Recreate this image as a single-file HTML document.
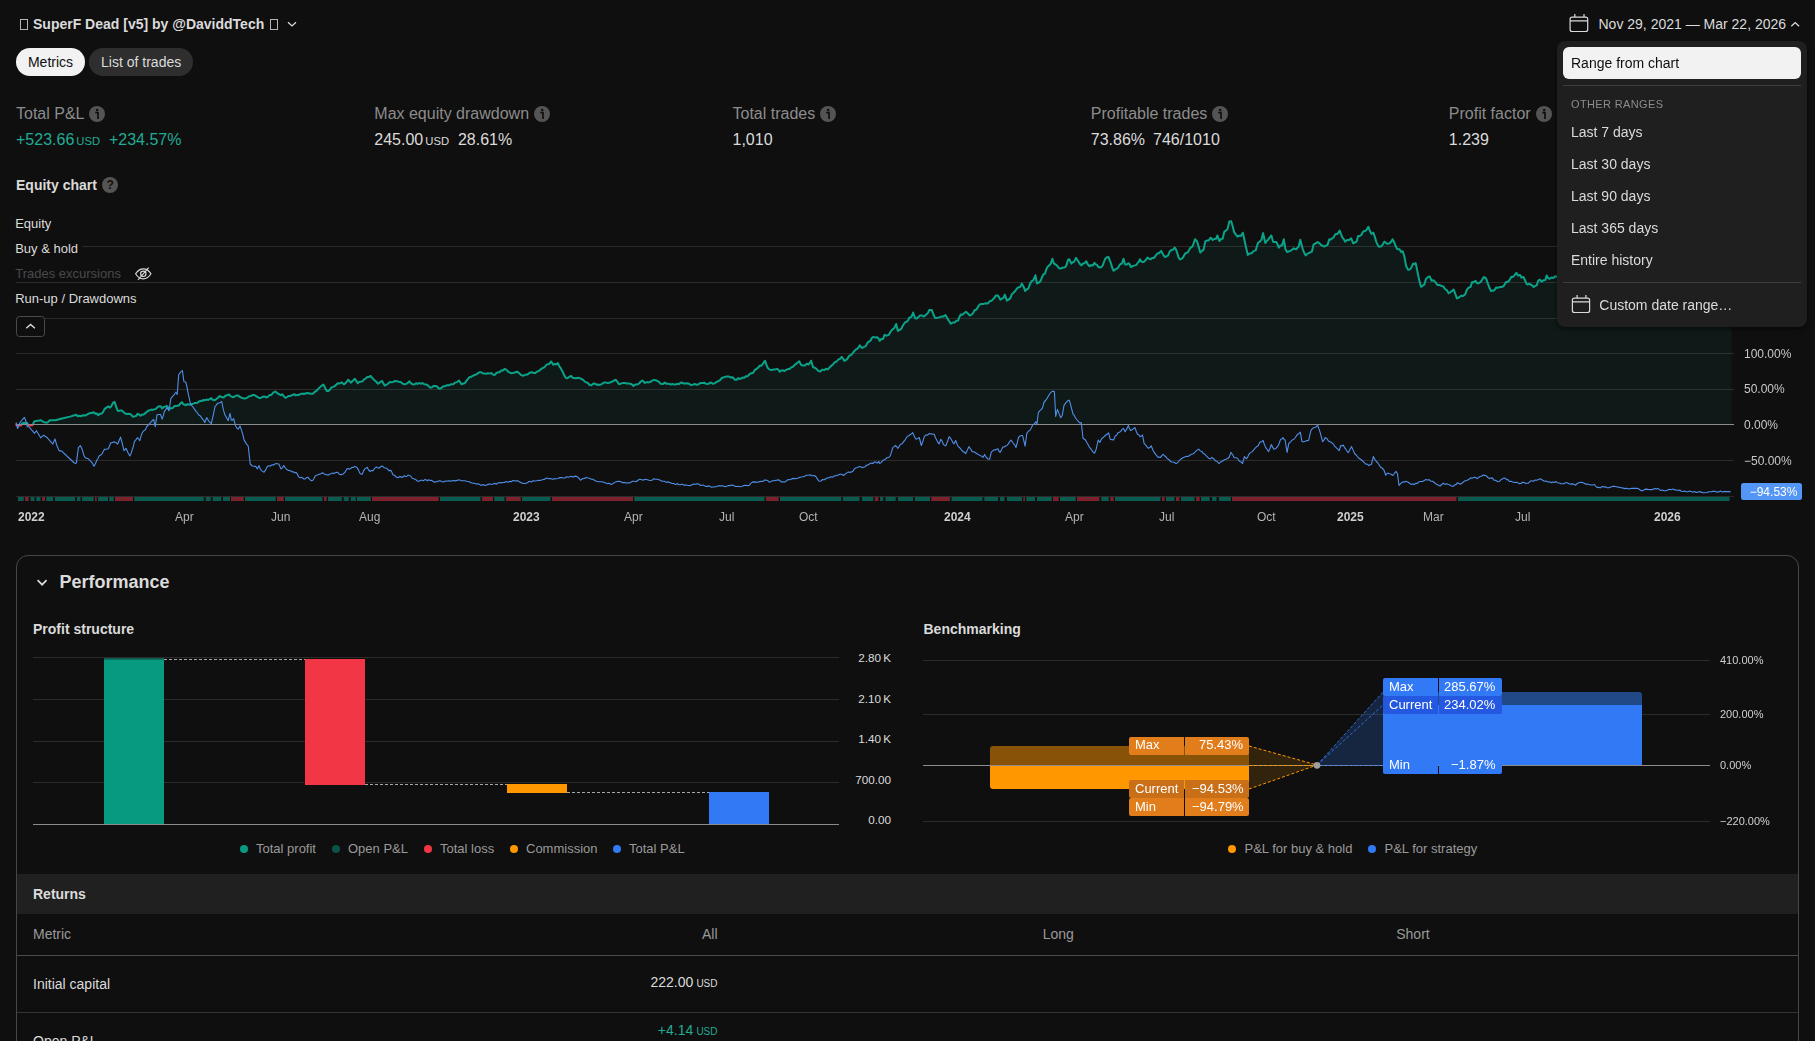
<!DOCTYPE html><html><head><meta charset="utf-8"><title>Strategy report</title><style>
*{box-sizing:border-box;margin:0;padding:0}
html,body{width:1815px;height:1041px;overflow:hidden;background:#0f0f0f;color:#dbdbdb;
 font-family:"Liberation Sans",sans-serif;font-size:14px;}
.a{position:absolute;white-space:nowrap;line-height:1}
svg{position:absolute;left:0;top:0;overflow:visible}
.b{font-weight:bold}
.c{will-change:transform}
</style></head><body>
<div class="a" style="left:20px;top:19px;width:8px;height:10.5px;border:1px solid #b4b4b4"></div>
<div class="a b" style="top:17px;font-size:14px;left:33px;color:#dbdbdb;">SuperF Dead [v5] by @DaviddTech</div>
<div class="a" style="left:270px;top:19px;width:8px;height:10.5px;border:1px solid #b4b4b4"></div>
<svg width="1815" height="1041"><path d="M288 22.3l4 3.6 4-3.6" fill="none" stroke="#dbdbdb" stroke-width="1.3"/></svg>
<div class="a" style="left:16px;top:48px;width:69px;height:28px;border-radius:14px;background:#f2f2f2;color:#0f0f0f;text-align:center;line-height:28px;font-size:14px">Metrics</div>
<div class="a" style="left:89.3px;top:48px;width:103.7px;height:28px;border-radius:14px;background:#2e2e2e;color:#dbdbdb;text-align:center;line-height:28px;font-size:14px">List of trades</div>
<svg width="1815" height="1041"><g fill="none" stroke="#dbdbdb" stroke-width="1.2"><rect x="1570.1" y="17.1" width="17.6" height="14.4" rx="2"/><path d="M1570.1 20.9h17.6M1574.8 14.1v3M1584.0 14.1v3"/></g><path d="M1791.3 26.2l3.9-3.6 3.9 3.6" fill="none" stroke="#dbdbdb" stroke-width="1.3"/></svg>
<div class="a " style="top:17px;font-size:14px;left:1598.5px;color:#dbdbdb;">Nov 29, 2021 — Mar 22, 2026</div>
<div class="a " style="top:106px;font-size:16px;left:16px;color:#8c8c8c;">Total P&amp;L</div>
<div class="a " style="top:106px;font-size:16px;left:374.3px;color:#8c8c8c;">Max equity drawdown</div>
<div class="a " style="top:106px;font-size:16px;left:732.5px;color:#8c8c8c;">Total trades</div>
<div class="a " style="top:106px;font-size:16px;left:1090.8px;color:#8c8c8c;">Profitable trades</div>
<div class="a " style="top:106px;font-size:16px;left:1448.8px;color:#8c8c8c;">Profit factor</div>
<svg width="1815" height="1041"><circle cx="97" cy="114" r="8" fill="#545454"/><circle cx="97.2" cy="110.1" r="1.25" fill="#0f0f0f"/><path d="M95.3 112.7h2.7v6.2" fill="none" stroke="#0f0f0f" stroke-width="1.7"/><circle cx="542" cy="114" r="8" fill="#545454"/><circle cx="542.2" cy="110.1" r="1.25" fill="#0f0f0f"/><path d="M540.3 112.7h2.7v6.2" fill="none" stroke="#0f0f0f" stroke-width="1.7"/><circle cx="828" cy="114" r="8" fill="#545454"/><circle cx="828.2" cy="110.1" r="1.25" fill="#0f0f0f"/><path d="M826.3 112.7h2.7v6.2" fill="none" stroke="#0f0f0f" stroke-width="1.7"/><circle cx="1220" cy="114" r="8" fill="#545454"/><circle cx="1220.2" cy="110.1" r="1.25" fill="#0f0f0f"/><path d="M1218.3 112.7h2.7v6.2" fill="none" stroke="#0f0f0f" stroke-width="1.7"/><circle cx="1544" cy="114" r="8" fill="#545454"/><circle cx="1544.2" cy="110.1" r="1.25" fill="#0f0f0f"/><path d="M1542.3 112.7h2.7v6.2" fill="none" stroke="#0f0f0f" stroke-width="1.7"/></svg>
<div class="a " style="top:132px;font-size:16px;left:16px;color:#22ab94;">+523.66<span style="font-size:11.3px;margin-left:2px">USD</span><span style="margin-left:8.8px">+234.57%</span></div>
<div class="a " style="top:132px;font-size:16px;left:374.3px;color:#dbdbdb;">245.00<span style="font-size:11.3px;margin-left:2px">USD</span><span style="margin-left:8.8px">28.61%</span></div>
<div class="a " style="top:132px;font-size:16px;left:732.5px;color:#dbdbdb;">1,010</div>
<div class="a " style="top:132px;font-size:16px;left:1090.8px;color:#dbdbdb;">73.86%<span style="margin-left:8px">746/1010</span></div>
<div class="a " style="top:132px;font-size:16px;left:1448.8px;color:#dbdbdb;">1.239</div>
<div class="a b" style="top:178px;font-size:14px;left:16px;color:#dbdbdb;">Equity chart</div>
<svg width="1815" height="1041"><circle cx="110" cy="185" r="8" fill="#545454"/></svg>
<div class="a b" style="top:179px;font-size:12px;left:106.6px;color:#0f0f0f;">?</div>
<svg width="1815" height="1041"><rect x="16" y="246" width="1718" height="1" fill="#2b2b2b"/><rect x="16" y="282" width="1718" height="1" fill="#2b2b2b"/><rect x="16" y="318" width="1718" height="1" fill="#2b2b2b"/><rect x="16" y="353" width="1718" height="1" fill="#2b2b2b"/><rect x="16" y="389" width="1718" height="1" fill="#2b2b2b"/><rect x="16" y="460" width="1718" height="1" fill="#2b2b2b"/><defs><clipPath id="up"><rect x="0" y="0" width="1815" height="424.5"/></clipPath><clipPath id="dn"><rect x="0" y="424.5" width="1815" height="100"/></clipPath></defs><path d="M16.0 424.5L17.0 425.6L21.0 425.4L22.5 423.0L27.0 422.8L28.5 425.4L32.5 425.3L33.5 423.0L34.5 421.2L41.1 420.3L44.6 422.5L47.5 422.6L49.8 420.3L55.4 420.3L62.0 418.5L70.0 416.6L74.5 415.3L76.1 414.8L77.6 416.2L79.1 415.7L81.2 416.2L83.2 415.2L85.3 415.6L86.8 414.7L88.4 413.8L90.2 413.1L91.9 413.0L93.7 412.2L95.3 413.8L96.8 413.5L98.3 415.3L99.9 413.7L101.4 413.8L103.0 412.1L104.5 409.1L106.4 407.6L108.3 406.4L109.9 407.6L111.4 406.2L112.9 402.9L114.5 401.9L116.0 406.2L117.6 410.7L119.1 410.9L120.6 410.4L122.2 410.8L123.7 412.2L125.2 413.5L126.8 414.0L128.3 413.8L129.8 413.9L131.4 414.9L132.9 416.8L134.1 416.5L135.2 416.1L136.4 415.7L137.5 413.8L139.1 414.5L140.6 415.7L142.1 414.6L143.7 414.5L145.2 413.2L146.7 412.2L148.3 410.4L149.8 410.4L151.4 409.6L152.9 409.9L154.0 409.4L155.2 409.1L156.7 408.1L158.3 406.6L159.8 406.1L161.0 406.7L162.1 408.4L163.6 407.0L165.2 406.6L166.7 405.8L167.9 407.2L169.0 409.4L170.2 408.1L171.3 408.4L172.9 407.8L174.4 406.1L175.9 405.9L177.5 405.8L179.0 405.3L180.6 403.2L182.1 402.2L183.2 404.3L184.4 404.5L185.9 405.3L187.5 404.1L189.0 404.8L190.8 403.9L192.6 404.0L194.4 403.0L195.9 402.9L197.5 402.8L199.0 401.5L200.5 400.8L202.1 401.0L203.6 399.9L205.1 400.2L206.7 399.6L208.2 399.9L209.7 399.2L211.3 398.1L212.4 399.7L213.6 399.9L215.1 400.0L216.7 398.8L218.2 397.5L219.7 396.1L221.7 397.0L223.6 397.6L225.4 395.8L227.2 395.1L229.0 394.5L230.9 396.4L232.8 397.2L234.6 396.5L236.4 395.5L238.2 395.6L240.0 397.0L241.8 397.8L243.5 398.4L245.5 398.4L247.4 397.6L249.1 396.2L250.7 396.1L252.4 395.1L254.0 394.9L255.7 395.8L257.4 396.9L259.0 397.9L260.7 397.9L262.3 397.0L264.0 396.5L265.2 396.8L266.4 397.5L268.1 396.6L269.8 394.9L271.4 394.9L273.5 392.4L275.5 391.6L277.6 393.4L279.7 394.5L280.9 395.2L282.1 394.2L283.8 396.2L285.5 397.9L287.1 397.0L288.8 395.9L290.4 395.9L292.5 395.0L294.5 394.2L295.8 395.4L297.0 394.9L298.7 394.9L300.3 394.1L302.0 393.6L304.0 394.0L306.1 393.2L307.8 392.9L309.4 393.6L311.1 393.7L312.7 393.7L314.4 392.2L316.0 391.2L317.7 389.5L319.3 387.9L321.4 385.9L323.5 384.6L325.1 387.9L326.8 390.9L328.4 391.1L330.1 389.6L331.3 387.5L332.6 387.1L334.2 386.4L335.9 385.1L337.5 383.3L339.6 383.5L341.7 382.3L342.9 383.7L344.1 384.3L346.2 382.5L348.3 379.7L349.5 381.2L350.7 382.6L352.8 380.9L354.9 378.8L356.3 380.9L357.7 383.3L359.6 381.7L361.5 381.7L362.7 381.2L364.0 379.3L365.6 378.6L367.3 377.1L368.9 376.9L370.6 376.0L372.2 377.8L373.9 379.7L376.0 381.5L378.0 383.8L380.1 382.1L382.1 381.0L383.4 383.3L384.6 385.5L386.3 384.9L387.9 383.8L389.6 382.1L391.4 382.3L393.2 381.9L395.0 381.0L396.9 381.3L398.7 381.7L400.6 382.0L402.5 383.6L404.5 384.3L406.1 384.0L407.8 382.9L409.4 381.3L411.1 383.3L412.7 384.3L414.4 384.5L416.0 383.2L417.7 383.9L419.3 383.0L421.0 383.7L422.6 383.1L424.3 384.3L426.2 384.5L428.2 385.6L430.1 387.6L431.7 387.5L433.4 386.1L435.0 386.0L436.7 386.2L438.3 388.0L440.0 388.8L441.7 387.7L443.3 386.3L445.0 386.3L447.0 385.2L449.1 385.3L451.2 384.2L453.2 384.3L455.2 382.6L457.1 382.1L459.0 380.5L460.2 382.3L461.5 384.3L463.1 383.5L464.8 383.3L466.0 381.4L467.3 379.7L469.3 377.3L471.4 376.7L473.1 375.7L474.7 375.0L476.4 374.4L478.0 373.1L479.7 372.2L481.3 372.2L483.0 373.5L484.6 373.4L486.3 373.9L487.9 373.1L489.6 373.5L491.2 373.1L492.9 374.6L494.5 375.0L496.2 373.2L497.9 372.3L499.5 372.2L501.2 370.5L502.8 370.4L504.5 368.9L506.4 369.6L508.3 371.8L510.2 372.7L511.5 373.2L512.7 373.1L514.8 372.5L516.9 371.7L518.9 372.9L521.0 375.0L522.6 375.7L524.3 375.2L526.0 374.6L527.6 374.4L529.7 372.8L531.7 372.2L533.4 372.9L535.0 373.1L536.7 371.9L538.3 371.2L540.0 370.1L541.7 368.5L543.3 367.9L545.0 366.4L547.0 364.4L549.1 364.0L551.2 361.5L553.2 364.8L554.8 363.9L556.3 364.5L557.9 363.1L559.3 366.3L560.7 368.1L562.7 371.9L564.8 376.4L566.0 378.0L567.3 378.3L569.3 376.8L571.4 376.0L572.6 377.8L573.9 378.0L576.0 378.3L578.0 377.7L579.7 378.1L581.3 378.8L583.4 380.1L585.5 382.1L587.5 382.7L589.6 385.0L591.5 385.3L593.4 383.4L595.4 383.8L596.6 384.8L597.9 384.6L599.9 385.0L602.0 383.8L604.0 382.5L606.1 382.6L607.8 383.0L609.4 382.8L611.1 382.0L612.7 381.3L614.2 380.5L615.7 379.7L617.4 381.8L619.0 384.3L621.0 383.6L623.1 382.9L625.1 383.0L626.8 383.6L628.4 383.4L630.1 383.8L631.7 384.3L633.4 386.0L635.3 384.4L637.2 384.5L639.2 383.3L640.8 381.5L642.5 380.5L643.7 381.7L645.0 383.0L646.8 382.0L648.7 382.4L650.5 381.8L652.4 380.5L654.3 379.9L656.3 380.5L658.2 381.3L659.4 382.3L660.7 383.8L662.7 384.1L664.8 382.6L666.7 383.8L668.7 383.7L670.6 384.6L672.2 383.9L673.9 384.5L675.5 384.6L677.2 383.8L678.8 384.2L680.5 382.7L682.1 382.6L683.8 383.6L685.5 383.4L687.1 383.3L689.0 383.7L691.0 385.1L692.9 384.6L694.8 384.0L696.7 384.8L698.7 384.3L700.7 382.9L702.8 383.0L704.5 382.8L706.1 383.8L708.2 384.0L710.2 382.6L711.5 382.7L712.7 383.8L714.4 383.4L716.0 382.3L717.7 381.3L719.8 380.3L721.8 378.0L723.5 377.4L725.1 376.9L726.8 376.4L728.4 376.4L730.5 377.4L732.6 377.2L733.8 378.6L735.0 379.7L736.7 379.7L738.3 378.0L739.6 379.1L740.8 378.8L742.5 377.6L744.1 377.7L745.8 376.3L747.4 376.4L749.4 374.3L751.3 373.2L753.2 372.7L754.9 369.8L756.5 369.0L758.2 367.5L759.8 365.6L761.1 365.8L762.3 364.8L763.7 362.4L765.1 360.7L766.4 364.6L767.8 368.1L769.6 369.6L771.4 370.1L773.3 369.5L775.3 369.4L777.2 368.9L778.4 369.8L779.7 371.7L781.3 370.5L783.0 370.3L784.6 371.0L786.3 369.8L787.9 369.1L789.6 369.0L791.2 367.4L792.9 366.8L795.0 364.6L797.0 363.1L799.2 361.2L801.2 365.1L803.0 365.5L804.9 365.4L806.7 363.8L808.6 364.5L809.8 362.9L811.1 360.7L813.1 367.3L814.9 367.8L816.7 369.1L818.5 371.1L820.4 371.4L822.4 369.6L824.3 370.1L826.0 368.8L827.6 369.4L829.3 367.8L830.9 366.1L832.6 364.8L834.6 362.4L836.7 361.5L838.3 359.5L840.0 358.8L841.7 356.8L842.9 358.3L844.1 360.7L845.8 360.2L847.4 358.8L848.7 356.4L849.9 355.5L851.6 354.7L853.2 352.5L854.5 350.9L855.7 349.7L857.8 348.3L859.8 345.2L861.1 347.3L862.3 348.0L864.0 346.8L865.6 346.4L866.9 343.9L868.1 342.2L869.3 341.4L870.6 340.6L871.8 338.0L873.1 336.9L875.1 337.4L877.2 337.3L878.4 338.3L879.7 340.9L881.3 339.0L883.0 338.9L884.6 334.8L886.7 335.7L888.8 334.8L890.4 331.9L892.1 329.8L893.3 328.9L894.5 327.7L896.2 324.0L897.9 331.0L899.5 329.9L901.2 329.0L902.4 326.4L903.6 324.4L905.3 322.2L906.9 321.6L908.2 320.2L909.4 317.4L910.7 317.5L911.9 315.8L913.1 312.5L915.2 318.3L916.9 318.5L918.5 317.1L919.8 315.6L921.0 315.5L922.2 315.5L923.5 316.6L925.1 315.6L926.8 314.1L928.0 312.9L929.3 310.0L930.5 310.1L931.7 310.0L933.4 314.2L935.0 317.8L937.1 317.9L939.2 317.4L941.2 316.6L943.3 316.6L945.5 315.0L946.9 317.5L948.3 319.9L949.5 321.5L950.7 323.7L952.8 322.6L954.9 322.4L956.5 320.7L958.2 320.4L959.4 317.0L960.7 314.5L962.3 314.8L964.0 313.3L966.0 311.7L967.9 313.5L969.8 315.5L971.0 315.1L972.2 314.1L973.5 312.3L974.7 310.0L976.0 310.0L977.2 308.3L978.4 306.2L979.7 304.5L981.7 303.9L983.8 303.9L985.9 303.3L987.9 303.4L989.2 301.8L990.4 300.9L991.7 300.7L992.9 299.3L994.1 298.3L995.4 296.0L996.6 295.4L997.9 295.6L999.1 297.3L1000.3 299.6L1002.0 298.7L1003.6 297.6L1004.8 294.6L1006.9 300.6L1008.6 299.6L1010.2 298.4L1011.9 294.0L1013.6 292.7L1015.2 291.0L1016.9 288.5L1018.5 287.2L1020.2 286.9L1021.8 283.6L1023.5 286.4L1025.1 291.0L1026.8 289.3L1028.4 288.5L1030.1 283.6L1031.7 281.1L1033.4 280.2L1035.4 275.3L1037.0 283.6L1038.7 282.6L1040.3 281.4L1042.5 276.1L1043.7 274.1L1045.0 273.6L1046.2 269.6L1047.4 267.0L1049.1 265.6L1050.7 263.7L1052.4 258.8L1054.0 263.7L1055.7 264.5L1057.4 266.0L1059.0 268.2L1060.7 268.5L1062.3 267.7L1064.0 267.5L1065.2 267.1L1066.4 265.4L1068.1 259.6L1069.4 259.3L1071.4 263.7L1072.6 262.3L1073.9 262.1L1076.0 257.9L1077.4 260.0L1078.8 262.1L1080.1 264.2L1081.3 265.4L1083.0 263.5L1084.6 263.2L1086.3 261.2L1087.9 264.5L1089.6 266.2L1091.2 265.2L1092.9 265.4L1094.5 262.9L1095.8 264.4L1097.0 264.9L1098.4 267.1L1099.8 267.5L1101.3 267.0L1102.8 265.4L1104.0 261.7L1105.3 258.8L1106.9 257.2L1108.6 257.1L1109.8 260.4L1111.1 263.7L1112.3 268.0L1113.6 270.8L1115.2 269.4L1116.9 268.7L1118.1 267.7L1119.3 265.4L1120.6 263.9L1121.8 263.7L1123.5 258.8L1125.1 264.5L1126.8 264.6L1128.4 263.2L1129.7 264.3L1130.9 267.0L1133.0 265.9L1135.0 265.4L1136.3 265.0L1137.5 263.2L1138.8 261.7L1140.0 259.2L1141.2 261.3L1142.5 262.0L1143.7 262.0L1145.0 260.8L1146.2 259.6L1147.4 257.5L1149.1 258.7L1150.7 259.2L1152.4 257.9L1154.0 257.9L1155.3 256.1L1156.5 254.5L1157.8 253.3L1159.0 253.2L1161.2 250.9L1163.0 254.4L1164.8 257.0L1166.4 256.5L1168.1 255.4L1169.8 251.2L1171.4 250.0L1173.1 249.6L1174.7 247.6L1176.0 249.5L1177.2 252.9L1178.4 256.9L1179.7 259.2L1181.3 258.9L1183.0 257.5L1185.0 253.7L1186.4 253.0L1187.9 252.1L1189.2 249.9L1190.4 247.6L1191.7 247.2L1192.9 245.5L1195.0 239.3L1197.0 241.3L1198.7 246.9L1200.3 252.6L1202.0 250.9L1203.6 249.6L1205.3 241.3L1206.9 240.6L1208.6 240.5L1210.7 237.7L1212.7 240.0L1214.4 239.0L1216.0 238.8L1217.4 235.5L1219.3 241.0L1221.0 239.1L1222.6 238.8L1224.3 231.7L1226.0 230.6L1227.6 228.9L1229.3 221.5L1231.2 221.2L1232.7 226.5L1234.2 232.2L1235.9 234.6L1237.5 236.7L1239.2 235.6L1240.8 236.0L1242.8 232.7L1244.3 239.2L1245.8 246.3L1247.8 254.9L1249.7 253.4L1251.6 253.2L1253.6 251.1L1255.7 250.4L1256.9 246.1L1258.2 242.6L1259.8 241.7L1261.5 239.7L1263.1 233.1L1265.3 243.0L1266.7 241.1L1268.1 239.7L1269.8 237.4L1271.4 235.5L1273.1 241.7L1274.7 242.1L1276.4 242.1L1277.6 244.4L1278.8 247.6L1280.5 245.6L1282.1 245.5L1283.8 239.3L1285.5 249.3L1287.1 252.1L1289.2 251.3L1291.2 250.4L1292.5 249.3L1293.7 248.3L1295.0 249.0L1296.2 249.3L1297.4 247.8L1298.7 246.6L1300.3 239.7L1301.6 244.8L1302.8 249.3L1304.2 252.7L1305.6 255.4L1307.5 253.7L1309.4 252.9L1310.7 252.2L1311.9 251.6L1313.6 244.6L1315.6 243.4L1317.7 242.1L1319.3 243.1L1321.0 245.0L1322.6 245.6L1324.3 246.6L1326.0 245.7L1327.6 244.6L1329.3 239.3L1330.9 239.4L1332.6 238.0L1333.8 237.1L1335.0 234.7L1336.3 233.9L1337.5 233.9L1339.7 230.6L1341.1 234.4L1342.5 237.7L1343.7 238.9L1345.0 241.7L1347.0 240.1L1349.1 240.0L1351.2 238.3L1353.2 243.3L1354.9 242.5L1356.5 241.7L1358.2 236.0L1359.8 236.1L1361.5 234.7L1362.7 232.3L1364.0 231.1L1365.2 231.1L1366.4 230.1L1368.4 226.8L1369.9 231.0L1371.4 233.9L1373.4 232.7L1374.9 237.1L1376.4 242.1L1377.6 244.7L1378.8 246.6L1380.5 246.7L1382.1 245.5L1384.3 241.7L1385.7 242.5L1387.1 243.8L1388.8 243.6L1390.4 242.6L1392.6 239.3L1394.5 243.0L1395.8 246.3L1397.0 248.8L1398.3 249.2L1399.5 249.3L1401.2 252.1L1402.8 251.2L1404.5 257.0L1406.1 266.1L1408.1 269.8L1409.6 269.6L1411.1 268.1L1413.1 263.6L1414.4 264.1L1415.7 263.1L1417.7 272.7L1419.3 280.6L1421.0 286.8L1422.6 285.8L1424.3 284.6L1426.0 279.0L1427.8 277.1L1429.6 276.4L1431.7 280.7L1432.5 280.4L1433.4 280.2L1435.4 282.1L1437.4 285.0L1439.4 284.9L1441.3 285.9L1443.2 286.2L1445.0 289.0L1446.8 290.1L1448.6 293.2L1450.2 292.3L1451.9 291.1L1453.6 289.5L1455.2 293.7L1456.9 298.4L1458.9 297.5L1461.0 295.8L1463.1 295.9L1465.1 294.5L1466.8 289.9L1468.6 287.6L1470.5 287.0L1472.1 282.1L1473.8 282.3L1475.5 280.8L1477.1 283.3L1478.8 283.2L1480.4 282.1L1482.1 279.8L1483.7 277.1L1485.0 277.5L1486.2 278.8L1487.9 283.7L1489.5 288.0L1491.2 291.3L1492.4 290.4L1493.6 290.7L1494.9 289.6L1496.1 287.4L1498.0 287.7L1499.8 287.1L1501.7 286.9L1503.6 286.2L1504.8 284.0L1506.0 281.9L1507.7 281.9L1509.3 280.4L1511.4 276.7L1512.9 276.9L1514.3 275.5L1516.4 272.8L1518.0 275.5L1520.1 275.0L1521.3 277.5L1523.4 276.9L1525.0 280.3L1526.7 284.1L1527.9 284.5L1529.2 283.7L1530.7 284.7L1532.2 285.3L1533.7 287.0L1535.2 285.9L1536.6 285.4L1538.3 280.6L1539.9 279.6L1541.6 281.7L1543.4 280.2L1545.3 280.0L1546.7 275.5L1548.2 278.3L1549.8 278.7L1551.5 277.5L1553.3 278.1L1555.1 276.3L1556.9 276.7L1558.9 276.0L1561.0 274.9L1562.5 274.5L1564.1 273.7L1565.6 274.1L1567.2 274.0L1568.8 274.2L1570.4 274.9L1572.0 273.9L1573.6 272.0L1575.5 270.6L1577.3 270.5L1579.2 270.5L1581.0 271.9L1582.9 273.5L1584.3 273.3L1585.8 275.1L1587.3 275.5L1588.7 276.0L1590.2 276.7L1591.7 276.4L1593.4 276.2L1595.1 277.2L1597.0 276.8L1598.9 277.3L1600.8 277.3L1602.5 277.2L1604.2 278.2L1606.0 278.3L1607.6 278.7L1609.2 279.9L1610.8 279.8L1612.4 279.6L1613.9 278.7L1615.5 280.3L1617.0 280.9L1618.5 282.2L1620.0 281.8L1621.5 282.2L1623.3 282.6L1625.2 283.7L1627.1 283.5L1629.0 283.8L1630.9 283.2L1632.9 282.9L1634.7 282.5L1636.5 282.2L1638.3 282.5L1640.2 282.6L1642.1 284.6L1644.1 284.8L1645.7 283.0L1647.4 282.6L1649.2 284.5L1651.0 285.4L1653.2 285.9L1655.3 286.2L1657.3 287.0L1659.2 286.2L1661.3 286.2L1663.4 285.3L1665.0 286.3L1666.5 285.0L1668.1 285.8L1670.0 286.2L1671.9 286.7L1673.8 286.9L1675.8 287.3L1677.7 288.3L1679.6 289.1L1681.6 289.1L1683.6 289.7L1685.6 290.0L1687.3 289.1L1689.1 290.0L1691.1 289.9L1693.0 289.9L1695.0 290.0L1696.6 289.6L1698.1 289.8L1699.7 290.0L1701.5 290.5L1703.3 290.0L1704.9 289.9L1706.5 289.1L1708.0 288.7L1709.6 289.6L1711.2 290.0L1713.2 289.0L1715.2 287.8L1717.2 287.5L1719.0 286.5L1720.8 286.8L1722.6 287.0L1724.3 286.6L1726.1 285.8L1727.9 281.9L1729.7 277.2L1731.5 272.0L1731.5 424.5L16.0 424.5Z" fill="#0b8f7a" fill-opacity="0.085"/><path d="M16.0 424.5L17.0 425.6L21.0 425.4L22.5 423.0L27.0 422.8L28.5 425.4L32.5 425.3L33.5 423.0L34.5 421.2L41.1 420.3L44.6 422.5L47.5 422.6L49.8 420.3L55.4 420.3L62.0 418.5L70.0 416.6L74.5 415.3L76.1 414.8L77.6 416.2L79.1 415.7L81.2 416.2L83.2 415.2L85.3 415.6L86.8 414.7L88.4 413.8L90.2 413.1L91.9 413.0L93.7 412.2L95.3 413.8L96.8 413.5L98.3 415.3L99.9 413.7L101.4 413.8L103.0 412.1L104.5 409.1L106.4 407.6L108.3 406.4L109.9 407.6L111.4 406.2L112.9 402.9L114.5 401.9L116.0 406.2L117.6 410.7L119.1 410.9L120.6 410.4L122.2 410.8L123.7 412.2L125.2 413.5L126.8 414.0L128.3 413.8L129.8 413.9L131.4 414.9L132.9 416.8L134.1 416.5L135.2 416.1L136.4 415.7L137.5 413.8L139.1 414.5L140.6 415.7L142.1 414.6L143.7 414.5L145.2 413.2L146.7 412.2L148.3 410.4L149.8 410.4L151.4 409.6L152.9 409.9L154.0 409.4L155.2 409.1L156.7 408.1L158.3 406.6L159.8 406.1L161.0 406.7L162.1 408.4L163.6 407.0L165.2 406.6L166.7 405.8L167.9 407.2L169.0 409.4L170.2 408.1L171.3 408.4L172.9 407.8L174.4 406.1L175.9 405.9L177.5 405.8L179.0 405.3L180.6 403.2L182.1 402.2L183.2 404.3L184.4 404.5L185.9 405.3L187.5 404.1L189.0 404.8L190.8 403.9L192.6 404.0L194.4 403.0L195.9 402.9L197.5 402.8L199.0 401.5L200.5 400.8L202.1 401.0L203.6 399.9L205.1 400.2L206.7 399.6L208.2 399.9L209.7 399.2L211.3 398.1L212.4 399.7L213.6 399.9L215.1 400.0L216.7 398.8L218.2 397.5L219.7 396.1L221.7 397.0L223.6 397.6L225.4 395.8L227.2 395.1L229.0 394.5L230.9 396.4L232.8 397.2L234.6 396.5L236.4 395.5L238.2 395.6L240.0 397.0L241.8 397.8L243.5 398.4L245.5 398.4L247.4 397.6L249.1 396.2L250.7 396.1L252.4 395.1L254.0 394.9L255.7 395.8L257.4 396.9L259.0 397.9L260.7 397.9L262.3 397.0L264.0 396.5L265.2 396.8L266.4 397.5L268.1 396.6L269.8 394.9L271.4 394.9L273.5 392.4L275.5 391.6L277.6 393.4L279.7 394.5L280.9 395.2L282.1 394.2L283.8 396.2L285.5 397.9L287.1 397.0L288.8 395.9L290.4 395.9L292.5 395.0L294.5 394.2L295.8 395.4L297.0 394.9L298.7 394.9L300.3 394.1L302.0 393.6L304.0 394.0L306.1 393.2L307.8 392.9L309.4 393.6L311.1 393.7L312.7 393.7L314.4 392.2L316.0 391.2L317.7 389.5L319.3 387.9L321.4 385.9L323.5 384.6L325.1 387.9L326.8 390.9L328.4 391.1L330.1 389.6L331.3 387.5L332.6 387.1L334.2 386.4L335.9 385.1L337.5 383.3L339.6 383.5L341.7 382.3L342.9 383.7L344.1 384.3L346.2 382.5L348.3 379.7L349.5 381.2L350.7 382.6L352.8 380.9L354.9 378.8L356.3 380.9L357.7 383.3L359.6 381.7L361.5 381.7L362.7 381.2L364.0 379.3L365.6 378.6L367.3 377.1L368.9 376.9L370.6 376.0L372.2 377.8L373.9 379.7L376.0 381.5L378.0 383.8L380.1 382.1L382.1 381.0L383.4 383.3L384.6 385.5L386.3 384.9L387.9 383.8L389.6 382.1L391.4 382.3L393.2 381.9L395.0 381.0L396.9 381.3L398.7 381.7L400.6 382.0L402.5 383.6L404.5 384.3L406.1 384.0L407.8 382.9L409.4 381.3L411.1 383.3L412.7 384.3L414.4 384.5L416.0 383.2L417.7 383.9L419.3 383.0L421.0 383.7L422.6 383.1L424.3 384.3L426.2 384.5L428.2 385.6L430.1 387.6L431.7 387.5L433.4 386.1L435.0 386.0L436.7 386.2L438.3 388.0L440.0 388.8L441.7 387.7L443.3 386.3L445.0 386.3L447.0 385.2L449.1 385.3L451.2 384.2L453.2 384.3L455.2 382.6L457.1 382.1L459.0 380.5L460.2 382.3L461.5 384.3L463.1 383.5L464.8 383.3L466.0 381.4L467.3 379.7L469.3 377.3L471.4 376.7L473.1 375.7L474.7 375.0L476.4 374.4L478.0 373.1L479.7 372.2L481.3 372.2L483.0 373.5L484.6 373.4L486.3 373.9L487.9 373.1L489.6 373.5L491.2 373.1L492.9 374.6L494.5 375.0L496.2 373.2L497.9 372.3L499.5 372.2L501.2 370.5L502.8 370.4L504.5 368.9L506.4 369.6L508.3 371.8L510.2 372.7L511.5 373.2L512.7 373.1L514.8 372.5L516.9 371.7L518.9 372.9L521.0 375.0L522.6 375.7L524.3 375.2L526.0 374.6L527.6 374.4L529.7 372.8L531.7 372.2L533.4 372.9L535.0 373.1L536.7 371.9L538.3 371.2L540.0 370.1L541.7 368.5L543.3 367.9L545.0 366.4L547.0 364.4L549.1 364.0L551.2 361.5L553.2 364.8L554.8 363.9L556.3 364.5L557.9 363.1L559.3 366.3L560.7 368.1L562.7 371.9L564.8 376.4L566.0 378.0L567.3 378.3L569.3 376.8L571.4 376.0L572.6 377.8L573.9 378.0L576.0 378.3L578.0 377.7L579.7 378.1L581.3 378.8L583.4 380.1L585.5 382.1L587.5 382.7L589.6 385.0L591.5 385.3L593.4 383.4L595.4 383.8L596.6 384.8L597.9 384.6L599.9 385.0L602.0 383.8L604.0 382.5L606.1 382.6L607.8 383.0L609.4 382.8L611.1 382.0L612.7 381.3L614.2 380.5L615.7 379.7L617.4 381.8L619.0 384.3L621.0 383.6L623.1 382.9L625.1 383.0L626.8 383.6L628.4 383.4L630.1 383.8L631.7 384.3L633.4 386.0L635.3 384.4L637.2 384.5L639.2 383.3L640.8 381.5L642.5 380.5L643.7 381.7L645.0 383.0L646.8 382.0L648.7 382.4L650.5 381.8L652.4 380.5L654.3 379.9L656.3 380.5L658.2 381.3L659.4 382.3L660.7 383.8L662.7 384.1L664.8 382.6L666.7 383.8L668.7 383.7L670.6 384.6L672.2 383.9L673.9 384.5L675.5 384.6L677.2 383.8L678.8 384.2L680.5 382.7L682.1 382.6L683.8 383.6L685.5 383.4L687.1 383.3L689.0 383.7L691.0 385.1L692.9 384.6L694.8 384.0L696.7 384.8L698.7 384.3L700.7 382.9L702.8 383.0L704.5 382.8L706.1 383.8L708.2 384.0L710.2 382.6L711.5 382.7L712.7 383.8L714.4 383.4L716.0 382.3L717.7 381.3L719.8 380.3L721.8 378.0L723.5 377.4L725.1 376.9L726.8 376.4L728.4 376.4L730.5 377.4L732.6 377.2L733.8 378.6L735.0 379.7L736.7 379.7L738.3 378.0L739.6 379.1L740.8 378.8L742.5 377.6L744.1 377.7L745.8 376.3L747.4 376.4L749.4 374.3L751.3 373.2L753.2 372.7L754.9 369.8L756.5 369.0L758.2 367.5L759.8 365.6L761.1 365.8L762.3 364.8L763.7 362.4L765.1 360.7L766.4 364.6L767.8 368.1L769.6 369.6L771.4 370.1L773.3 369.5L775.3 369.4L777.2 368.9L778.4 369.8L779.7 371.7L781.3 370.5L783.0 370.3L784.6 371.0L786.3 369.8L787.9 369.1L789.6 369.0L791.2 367.4L792.9 366.8L795.0 364.6L797.0 363.1L799.2 361.2L801.2 365.1L803.0 365.5L804.9 365.4L806.7 363.8L808.6 364.5L809.8 362.9L811.1 360.7L813.1 367.3L814.9 367.8L816.7 369.1L818.5 371.1L820.4 371.4L822.4 369.6L824.3 370.1L826.0 368.8L827.6 369.4L829.3 367.8L830.9 366.1L832.6 364.8L834.6 362.4L836.7 361.5L838.3 359.5L840.0 358.8L841.7 356.8L842.9 358.3L844.1 360.7L845.8 360.2L847.4 358.8L848.7 356.4L849.9 355.5L851.6 354.7L853.2 352.5L854.5 350.9L855.7 349.7L857.8 348.3L859.8 345.2L861.1 347.3L862.3 348.0L864.0 346.8L865.6 346.4L866.9 343.9L868.1 342.2L869.3 341.4L870.6 340.6L871.8 338.0L873.1 336.9L875.1 337.4L877.2 337.3L878.4 338.3L879.7 340.9L881.3 339.0L883.0 338.9L884.6 334.8L886.7 335.7L888.8 334.8L890.4 331.9L892.1 329.8L893.3 328.9L894.5 327.7L896.2 324.0L897.9 331.0L899.5 329.9L901.2 329.0L902.4 326.4L903.6 324.4L905.3 322.2L906.9 321.6L908.2 320.2L909.4 317.4L910.7 317.5L911.9 315.8L913.1 312.5L915.2 318.3L916.9 318.5L918.5 317.1L919.8 315.6L921.0 315.5L922.2 315.5L923.5 316.6L925.1 315.6L926.8 314.1L928.0 312.9L929.3 310.0L930.5 310.1L931.7 310.0L933.4 314.2L935.0 317.8L937.1 317.9L939.2 317.4L941.2 316.6L943.3 316.6L945.5 315.0L946.9 317.5L948.3 319.9L949.5 321.5L950.7 323.7L952.8 322.6L954.9 322.4L956.5 320.7L958.2 320.4L959.4 317.0L960.7 314.5L962.3 314.8L964.0 313.3L966.0 311.7L967.9 313.5L969.8 315.5L971.0 315.1L972.2 314.1L973.5 312.3L974.7 310.0L976.0 310.0L977.2 308.3L978.4 306.2L979.7 304.5L981.7 303.9L983.8 303.9L985.9 303.3L987.9 303.4L989.2 301.8L990.4 300.9L991.7 300.7L992.9 299.3L994.1 298.3L995.4 296.0L996.6 295.4L997.9 295.6L999.1 297.3L1000.3 299.6L1002.0 298.7L1003.6 297.6L1004.8 294.6L1006.9 300.6L1008.6 299.6L1010.2 298.4L1011.9 294.0L1013.6 292.7L1015.2 291.0L1016.9 288.5L1018.5 287.2L1020.2 286.9L1021.8 283.6L1023.5 286.4L1025.1 291.0L1026.8 289.3L1028.4 288.5L1030.1 283.6L1031.7 281.1L1033.4 280.2L1035.4 275.3L1037.0 283.6L1038.7 282.6L1040.3 281.4L1042.5 276.1L1043.7 274.1L1045.0 273.6L1046.2 269.6L1047.4 267.0L1049.1 265.6L1050.7 263.7L1052.4 258.8L1054.0 263.7L1055.7 264.5L1057.4 266.0L1059.0 268.2L1060.7 268.5L1062.3 267.7L1064.0 267.5L1065.2 267.1L1066.4 265.4L1068.1 259.6L1069.4 259.3L1071.4 263.7L1072.6 262.3L1073.9 262.1L1076.0 257.9L1077.4 260.0L1078.8 262.1L1080.1 264.2L1081.3 265.4L1083.0 263.5L1084.6 263.2L1086.3 261.2L1087.9 264.5L1089.6 266.2L1091.2 265.2L1092.9 265.4L1094.5 262.9L1095.8 264.4L1097.0 264.9L1098.4 267.1L1099.8 267.5L1101.3 267.0L1102.8 265.4L1104.0 261.7L1105.3 258.8L1106.9 257.2L1108.6 257.1L1109.8 260.4L1111.1 263.7L1112.3 268.0L1113.6 270.8L1115.2 269.4L1116.9 268.7L1118.1 267.7L1119.3 265.4L1120.6 263.9L1121.8 263.7L1123.5 258.8L1125.1 264.5L1126.8 264.6L1128.4 263.2L1129.7 264.3L1130.9 267.0L1133.0 265.9L1135.0 265.4L1136.3 265.0L1137.5 263.2L1138.8 261.7L1140.0 259.2L1141.2 261.3L1142.5 262.0L1143.7 262.0L1145.0 260.8L1146.2 259.6L1147.4 257.5L1149.1 258.7L1150.7 259.2L1152.4 257.9L1154.0 257.9L1155.3 256.1L1156.5 254.5L1157.8 253.3L1159.0 253.2L1161.2 250.9L1163.0 254.4L1164.8 257.0L1166.4 256.5L1168.1 255.4L1169.8 251.2L1171.4 250.0L1173.1 249.6L1174.7 247.6L1176.0 249.5L1177.2 252.9L1178.4 256.9L1179.7 259.2L1181.3 258.9L1183.0 257.5L1185.0 253.7L1186.4 253.0L1187.9 252.1L1189.2 249.9L1190.4 247.6L1191.7 247.2L1192.9 245.5L1195.0 239.3L1197.0 241.3L1198.7 246.9L1200.3 252.6L1202.0 250.9L1203.6 249.6L1205.3 241.3L1206.9 240.6L1208.6 240.5L1210.7 237.7L1212.7 240.0L1214.4 239.0L1216.0 238.8L1217.4 235.5L1219.3 241.0L1221.0 239.1L1222.6 238.8L1224.3 231.7L1226.0 230.6L1227.6 228.9L1229.3 221.5L1231.2 221.2L1232.7 226.5L1234.2 232.2L1235.9 234.6L1237.5 236.7L1239.2 235.6L1240.8 236.0L1242.8 232.7L1244.3 239.2L1245.8 246.3L1247.8 254.9L1249.7 253.4L1251.6 253.2L1253.6 251.1L1255.7 250.4L1256.9 246.1L1258.2 242.6L1259.8 241.7L1261.5 239.7L1263.1 233.1L1265.3 243.0L1266.7 241.1L1268.1 239.7L1269.8 237.4L1271.4 235.5L1273.1 241.7L1274.7 242.1L1276.4 242.1L1277.6 244.4L1278.8 247.6L1280.5 245.6L1282.1 245.5L1283.8 239.3L1285.5 249.3L1287.1 252.1L1289.2 251.3L1291.2 250.4L1292.5 249.3L1293.7 248.3L1295.0 249.0L1296.2 249.3L1297.4 247.8L1298.7 246.6L1300.3 239.7L1301.6 244.8L1302.8 249.3L1304.2 252.7L1305.6 255.4L1307.5 253.7L1309.4 252.9L1310.7 252.2L1311.9 251.6L1313.6 244.6L1315.6 243.4L1317.7 242.1L1319.3 243.1L1321.0 245.0L1322.6 245.6L1324.3 246.6L1326.0 245.7L1327.6 244.6L1329.3 239.3L1330.9 239.4L1332.6 238.0L1333.8 237.1L1335.0 234.7L1336.3 233.9L1337.5 233.9L1339.7 230.6L1341.1 234.4L1342.5 237.7L1343.7 238.9L1345.0 241.7L1347.0 240.1L1349.1 240.0L1351.2 238.3L1353.2 243.3L1354.9 242.5L1356.5 241.7L1358.2 236.0L1359.8 236.1L1361.5 234.7L1362.7 232.3L1364.0 231.1L1365.2 231.1L1366.4 230.1L1368.4 226.8L1369.9 231.0L1371.4 233.9L1373.4 232.7L1374.9 237.1L1376.4 242.1L1377.6 244.7L1378.8 246.6L1380.5 246.7L1382.1 245.5L1384.3 241.7L1385.7 242.5L1387.1 243.8L1388.8 243.6L1390.4 242.6L1392.6 239.3L1394.5 243.0L1395.8 246.3L1397.0 248.8L1398.3 249.2L1399.5 249.3L1401.2 252.1L1402.8 251.2L1404.5 257.0L1406.1 266.1L1408.1 269.8L1409.6 269.6L1411.1 268.1L1413.1 263.6L1414.4 264.1L1415.7 263.1L1417.7 272.7L1419.3 280.6L1421.0 286.8L1422.6 285.8L1424.3 284.6L1426.0 279.0L1427.8 277.1L1429.6 276.4L1431.7 280.7L1432.5 280.4L1433.4 280.2L1435.4 282.1L1437.4 285.0L1439.4 284.9L1441.3 285.9L1443.2 286.2L1445.0 289.0L1446.8 290.1L1448.6 293.2L1450.2 292.3L1451.9 291.1L1453.6 289.5L1455.2 293.7L1456.9 298.4L1458.9 297.5L1461.0 295.8L1463.1 295.9L1465.1 294.5L1466.8 289.9L1468.6 287.6L1470.5 287.0L1472.1 282.1L1473.8 282.3L1475.5 280.8L1477.1 283.3L1478.8 283.2L1480.4 282.1L1482.1 279.8L1483.7 277.1L1485.0 277.5L1486.2 278.8L1487.9 283.7L1489.5 288.0L1491.2 291.3L1492.4 290.4L1493.6 290.7L1494.9 289.6L1496.1 287.4L1498.0 287.7L1499.8 287.1L1501.7 286.9L1503.6 286.2L1504.8 284.0L1506.0 281.9L1507.7 281.9L1509.3 280.4L1511.4 276.7L1512.9 276.9L1514.3 275.5L1516.4 272.8L1518.0 275.5L1520.1 275.0L1521.3 277.5L1523.4 276.9L1525.0 280.3L1526.7 284.1L1527.9 284.5L1529.2 283.7L1530.7 284.7L1532.2 285.3L1533.7 287.0L1535.2 285.9L1536.6 285.4L1538.3 280.6L1539.9 279.6L1541.6 281.7L1543.4 280.2L1545.3 280.0L1546.7 275.5L1548.2 278.3L1549.8 278.7L1551.5 277.5L1553.3 278.1L1555.1 276.3L1556.9 276.7L1558.9 276.0L1561.0 274.9L1562.5 274.5L1564.1 273.7L1565.6 274.1L1567.2 274.0L1568.8 274.2L1570.4 274.9L1572.0 273.9L1573.6 272.0L1575.5 270.6L1577.3 270.5L1579.2 270.5L1581.0 271.9L1582.9 273.5L1584.3 273.3L1585.8 275.1L1587.3 275.5L1588.7 276.0L1590.2 276.7L1591.7 276.4L1593.4 276.2L1595.1 277.2L1597.0 276.8L1598.9 277.3L1600.8 277.3L1602.5 277.2L1604.2 278.2L1606.0 278.3L1607.6 278.7L1609.2 279.9L1610.8 279.8L1612.4 279.6L1613.9 278.7L1615.5 280.3L1617.0 280.9L1618.5 282.2L1620.0 281.8L1621.5 282.2L1623.3 282.6L1625.2 283.7L1627.1 283.5L1629.0 283.8L1630.9 283.2L1632.9 282.9L1634.7 282.5L1636.5 282.2L1638.3 282.5L1640.2 282.6L1642.1 284.6L1644.1 284.8L1645.7 283.0L1647.4 282.6L1649.2 284.5L1651.0 285.4L1653.2 285.9L1655.3 286.2L1657.3 287.0L1659.2 286.2L1661.3 286.2L1663.4 285.3L1665.0 286.3L1666.5 285.0L1668.1 285.8L1670.0 286.2L1671.9 286.7L1673.8 286.9L1675.8 287.3L1677.7 288.3L1679.6 289.1L1681.6 289.1L1683.6 289.7L1685.6 290.0L1687.3 289.1L1689.1 290.0L1691.1 289.9L1693.0 289.9L1695.0 290.0L1696.6 289.6L1698.1 289.8L1699.7 290.0L1701.5 290.5L1703.3 290.0L1704.9 289.9L1706.5 289.1L1708.0 288.7L1709.6 289.6L1711.2 290.0L1713.2 289.0L1715.2 287.8L1717.2 287.5L1719.0 286.5L1720.8 286.8L1722.6 287.0L1724.3 286.6L1726.1 285.8L1727.9 281.9L1729.7 277.2L1731.5 272.0" clip-path="url(#up)" fill="none" stroke="#0aa389" stroke-width="2" stroke-linejoin="round" stroke-linecap="round"/><path d="M16.0 424.5L17.0 425.6L21.0 425.4L22.5 423.0L27.0 422.8L28.5 425.4L32.5 425.3L33.5 423.0L34.5 421.2L41.1 420.3L44.6 422.5L47.5 422.6" clip-path="url(#dn)" fill="none" stroke="#f23645" stroke-width="2" stroke-linejoin="round" stroke-linecap="round"/><rect x="16" y="424" width="1718" height="1" fill="#8c8c8c"/><path d="M16.1 422.5L17.6 428.5L20.0 422.5L24.3 417.3L25.5 420.0L27.3 426.8L29.0 426.8L34.6 433.3L36.4 430.7L40.7 437.8L43.5 435.2L46.7 437.2L52.8 444.1L55.0 438.9L56.7 445.0L59.2 450.9L61.5 450.9L68.4 457.5L73.8 462.5L75.1 463.4L76.4 462.9L78.4 447.6L80.4 445.7L82.2 449.4L84.1 456.0L85.4 457.9L86.8 458.3L88.7 459.1L90.7 461.4L92.4 463.2L94.0 466.3L95.4 463.8L96.8 460.3L98.0 458.5L99.1 456.0L100.7 455.1L102.2 453.7L103.3 451.2L104.5 449.4L106.4 449.3L108.3 448.8L109.5 446.0L110.6 442.9L111.8 442.7L112.9 442.2L114.5 441.9L116.0 442.6L117.6 444.2L119.1 440.5L120.6 437.1L122.3 443.7L124.0 450.6L126.0 448.3L127.9 452.5L129.8 456.0L131.0 453.7L132.2 449.9L133.3 446.4L134.5 441.4L136.0 439.6L137.5 437.6L138.7 439.0L139.8 440.6L141.0 436.4L142.1 433.0L143.7 430.7L145.2 429.9L146.7 426.7L148.3 425.0L150.1 423.1L151.9 421.0L153.7 419.4L155.2 426.8L157.0 414.8L158.8 414.5L160.6 414.5L162.1 419.1L163.3 415.9L164.4 411.4L165.7 409.6L167.0 407.6L169.0 410.7L170.9 398.4L172.9 396.1L174.4 394.3L175.9 392.2L177.2 394.5L178.7 374.6L180.6 372.2L182.4 370.7L183.9 381.5L185.9 382.3L187.1 387.3L188.2 393.8L189.4 398.9L190.5 404.5L192.5 406.3L194.4 409.1L195.9 411.1L197.5 413.0L199.0 415.3L200.5 416.1L202.0 418.5L203.4 419.8L204.8 422.5L206.7 417.6L208.2 420.3L209.7 422.2L211.3 423.7L213.2 415.3L215.1 406.1L216.3 405.3L217.4 403.3L218.9 403.1L220.3 402.5L221.7 401.5L223.6 410.7L225.1 415.3L226.6 417.7L228.2 420.7L230.0 413.4L231.3 420.2L232.4 420.2L233.6 418.7L235.6 426.0L236.9 428.3L238.2 429.1L240.0 426.0L241.7 430.9L242.9 434.9L244.1 440.0L245.5 442.4L246.8 444.4L248.2 446.0L249.2 454.9L250.2 464.0L251.3 465.0L252.4 466.0L254.0 466.2L255.7 466.4L257.4 468.9L259.0 465.6L260.2 468.8L261.5 470.6L262.7 471.4L264.0 472.2L265.6 469.9L267.3 466.4L268.9 465.7L270.6 466.0L272.2 464.8L273.9 464.9L275.5 463.6L277.2 463.7L278.8 464.0L279.9 466.6L281.0 468.9L282.4 467.9L283.8 465.6L285.5 468.0L287.1 469.8L288.8 470.4L290.4 470.7L292.1 471.9L293.4 471.8L294.8 472.7L296.2 472.6L297.4 474.2L298.7 476.9L300.1 477.9L301.4 477.3L302.8 478.0L304.0 479.1L305.3 478.8L306.5 477.7L307.8 477.2L309.4 479.2L311.1 480.6L312.7 480.5L314.0 478.5L315.2 475.9L316.6 475.3L318.0 474.8L319.3 474.2L321.0 473.7L322.6 472.7L324.3 473.9L326.0 474.7L327.2 474.7L328.4 475.2L329.8 474.0L331.2 473.8L332.6 473.1L333.9 473.5L335.3 472.7L336.7 472.2L337.9 472.5L339.2 474.2L340.6 474.6L341.9 474.4L343.3 473.9L345.0 472.2L346.6 469.3L348.0 468.5L349.4 469.2L350.7 468.6L352.1 467.2L353.5 467.4L354.9 466.4L356.1 466.9L357.4 468.1L358.6 470.1L359.8 473.1L361.1 474.2L362.3 474.2L363.6 470.9L364.8 468.9L366.0 468.1L367.3 467.3L368.5 469.9L369.8 471.4L371.4 470.6L373.1 470.6L374.7 468.3L376.4 466.9L378.0 468.1L379.4 468.0L380.8 466.5L382.1 466.0L383.8 467.4L385.5 468.1L387.1 468.6L388.8 470.6L390.0 470.4L391.2 470.6L392.9 474.7L394.5 475.2L396.2 477.0L397.9 477.7L399.5 476.6L401.2 476.9L402.5 477.4L403.9 475.8L405.3 476.4L406.7 476.5L408.0 475.0L409.4 475.5L410.8 476.2L412.2 478.2L413.6 478.8L414.9 479.1L416.3 480.0L417.7 481.3L419.3 481.1L421.0 480.2L422.2 480.3L423.5 480.8L424.7 479.5L426.0 479.7L427.3 480.7L428.7 479.7L430.1 480.5L431.5 480.3L432.8 481.3L434.2 482.1L435.6 481.9L437.0 481.8L438.3 481.0L440.0 480.8L441.7 481.5L443.3 482.1L445.0 481.0L446.6 481.2L448.3 480.8L449.9 481.1L451.6 481.0L453.2 480.5L455.2 480.9L457.1 480.4L459.0 479.7L460.9 480.6L462.9 480.8L464.8 480.8L466.7 481.3L468.7 481.5L470.6 482.5L472.5 483.3L474.4 483.3L476.4 484.1L478.0 483.8L479.7 484.6L481.3 485.5L483.0 484.6L484.6 485.5L486.3 485.1L487.9 484.4L489.6 484.1L491.2 484.2L492.9 484.3L494.5 483.3L496.2 484.2L497.9 483.0L499.5 482.5L501.2 482.9L502.8 482.5L504.5 482.5L506.1 481.5L507.8 482.2L509.4 481.4L511.1 481.8L512.5 480.8L513.8 480.5L515.2 481.0L516.6 480.7L518.0 480.9L519.3 481.8L520.7 482.6L522.1 482.9L523.5 483.5L525.4 483.5L527.3 482.7L529.3 481.3L531.2 482.0L533.1 480.7L535.0 481.0L536.7 480.7L538.3 480.3L540.0 480.5L541.7 480.0L543.3 479.5L545.0 479.1L546.6 478.0L548.5 478.8L550.5 478.5L552.4 479.3L554.3 478.9L556.3 478.8L558.2 478.5L559.8 477.6L561.5 477.5L563.1 478.0L564.8 478.0L566.7 476.8L568.7 477.3L570.6 476.4L571.8 476.4L573.1 477.2L574.7 476.1L576.4 476.4L577.7 477.1L579.1 478.5L580.5 480.2L582.4 478.8L584.4 478.4L586.3 477.5L587.9 478.0L589.6 478.3L591.2 479.3L592.9 479.2L594.5 480.2L596.4 481.2L598.3 481.7L600.1 481.8L602.0 481.8L603.8 482.3L605.6 483.0L607.4 483.6L609.3 483.3L611.1 484.6L612.5 483.7L613.8 483.0L615.2 482.1L617.1 481.5L619.1 481.3L621.0 481.8L622.6 482.7L624.3 482.4L626.0 483.0L627.6 482.7L629.3 483.0L630.9 482.2L632.6 481.3L634.2 481.3L636.1 481.7L637.9 480.3L639.8 479.3L641.7 479.7L643.5 480.1L645.4 479.3L647.2 479.7L649.1 480.2L650.7 480.5L652.4 480.0L654.0 478.8L655.7 479.3L657.4 479.2L659.0 479.7L660.7 480.6L662.3 481.3L664.3 481.3L666.3 482.3L668.3 481.9L670.2 482.7L672.2 483.5L673.9 483.5L675.5 484.6L677.2 483.5L678.8 484.8L680.5 484.6L682.1 484.3L683.8 485.1L685.5 485.0L687.1 485.2L688.8 485.5L690.4 485.6L692.1 484.7L693.7 484.0L695.4 484.3L697.0 483.9L698.7 484.0L700.3 485.4L702.0 485.2L703.6 485.1L705.5 486.4L707.4 486.4L709.2 485.9L711.1 487.1L712.9 487.0L714.8 486.9L716.7 486.5L718.5 485.8L720.2 485.9L721.8 485.8L723.5 486.0L725.1 486.7L726.8 486.3L728.4 485.5L730.1 485.6L731.7 485.1L733.4 485.4L735.0 486.4L736.7 486.5L738.3 486.3L740.1 486.8L741.9 486.5L743.7 485.5L745.5 485.3L747.3 485.6L749.1 485.5L750.7 483.4L752.4 482.1L754.2 481.9L756.0 482.1L757.9 482.3L759.7 481.6L761.5 481.3L763.1 481.4L764.8 479.9L766.4 480.2L767.8 480.5L769.2 482.1L770.6 481.8L772.5 480.7L774.4 480.6L776.4 480.2L778.0 479.9L779.7 480.3L781.3 482.0L783.0 481.8L784.6 482.1L786.3 481.0L787.9 479.6L789.6 479.7L791.6 478.9L793.6 478.4L795.5 478.7L797.5 478.2L799.5 477.5L801.2 477.0L802.8 476.8L804.5 476.4L806.4 475.2L808.3 475.3L810.2 474.7L811.6 475.7L813.0 475.7L814.4 475.5L816.0 476.8L817.7 479.4L819.3 481.3L821.0 481.0L822.6 479.5L824.3 479.8L826.0 478.5L827.6 477.9L829.3 477.8L830.9 476.8L832.6 477.2L834.2 475.9L836.1 475.8L838.1 474.9L840.0 474.2L841.7 474.3L843.3 475.5L845.0 474.2L846.6 473.1L848.3 471.9L849.9 472.4L851.6 471.9L852.9 471.2L854.3 468.9L855.7 468.1L857.1 467.6L858.5 467.0L859.8 466.4L861.1 466.9L862.3 467.6L863.7 467.2L865.1 466.8L866.4 465.3L868.1 464.9L869.8 463.8L871.4 463.1L872.8 463.5L874.2 462.1L875.5 462.0L877.2 463.1L878.8 461.5L879.7 463.6L881.3 462.4L883.0 460.3L884.4 459.7L885.7 459.0L887.1 457.7L888.8 457.3L890.4 455.7L891.7 451.1L892.9 447.4L894.1 446.6L895.4 445.5L896.6 446.7L897.9 448.3L899.1 446.6L900.3 444.5L902.0 443.8L903.6 441.7L904.9 440.2L906.1 438.3L907.5 436.3L908.9 435.8L910.2 434.5L911.5 433.9L912.7 432.6L914.4 436.5L916.0 439.2L917.7 438.6L919.3 437.5L921.3 445.5L922.8 441.6L924.3 436.7L926.0 434.8L927.6 435.2L929.3 433.4L930.9 434.0L932.6 434.1L934.2 434.2L935.5 437.8L936.7 440.0L937.9 442.5L939.2 443.8L940.8 439.2L942.1 441.0L943.3 444.1L944.5 445.5L945.8 445.8L947.4 441.7L949.1 436.7L950.3 437.9L951.6 440.0L952.8 442.3L954.0 443.8L955.7 440.5L956.9 443.7L958.2 446.6L959.8 447.8L961.5 449.9L962.9 451.7L964.2 451.9L965.6 453.7L967.3 450.3L968.9 446.6L970.6 449.0L972.2 451.6L973.9 451.8L975.5 452.7L976.9 453.7L978.3 454.4L979.7 455.4L981.3 455.9L983.0 457.4L984.6 454.4L986.3 457.4L987.9 459.0L989.6 459.3L991.2 452.4L992.6 450.9L994.0 449.9L995.4 449.9L996.6 449.3L997.9 448.8L998.9 451.1L1000.0 452.4L1001.4 450.0L1002.8 447.1L1004.2 447.0L1005.6 446.0L1006.9 445.5L1008.3 443.9L1009.7 441.6L1011.1 440.0L1012.7 442.5L1014.4 444.6L1016.0 447.4L1017.3 442.5L1018.5 437.5L1019.9 436.1L1021.3 435.5L1022.6 435.5L1023.9 441.2L1025.1 446.1L1026.8 433.4L1028.4 431.2L1030.1 430.1L1031.3 428.0L1032.6 425.1L1034.2 423.9L1035.9 421.8L1037.0 424.0L1038.3 412.7L1039.7 410.9L1041.1 409.7L1042.5 407.8L1044.1 402.0L1045.5 400.5L1046.9 398.7L1048.3 396.2L1049.6 394.0L1051.0 392.4L1052.4 391.2L1054.4 391.6L1055.7 416.4L1057.4 409.4L1059.0 413.4L1060.7 417.7L1062.3 415.2L1064.0 405.3L1065.6 403.2L1067.3 401.2L1068.3 400.4L1069.4 400.3L1071.4 407.8L1073.1 414.4L1074.3 415.4L1075.5 418.0L1077.2 420.0L1078.8 421.8L1080.1 423.0L1081.3 422.6L1083.0 438.3L1084.2 439.0L1085.5 440.0L1086.8 442.5L1088.2 444.8L1089.6 447.4L1091.2 449.3L1092.9 451.9L1094.5 453.2L1096.2 449.1L1098.2 440.0L1099.8 442.5L1100.9 440.1L1102.0 438.3L1103.6 437.2L1105.3 435.5L1106.9 434.2L1108.6 432.9L1110.2 439.2L1111.9 439.6L1113.6 440.0L1115.2 435.9L1116.6 435.3L1118.0 432.8L1119.3 432.2L1120.7 431.5L1122.1 429.4L1123.5 428.4L1125.1 431.7L1126.8 428.9L1128.4 425.6L1129.5 428.6L1130.6 430.6L1132.1 429.8L1133.6 428.4L1135.0 427.6L1136.3 431.5L1137.5 434.2L1138.8 434.8L1140.0 436.7L1141.2 436.1L1142.5 435.0L1144.1 443.3L1145.5 444.8L1146.9 446.7L1148.3 448.3L1149.8 447.6L1151.2 445.8L1153.2 450.7L1154.9 453.4L1156.5 455.4L1158.2 457.4L1159.4 457.0L1160.7 457.4L1161.9 455.4L1163.1 454.4L1164.5 455.7L1165.9 456.8L1167.3 458.7L1168.9 459.4L1170.6 461.6L1172.2 462.0L1174.1 462.2L1176.0 463.6L1177.6 462.8L1179.1 460.7L1180.6 459.3L1182.1 458.2L1184.1 457.3L1186.0 456.4L1187.9 456.5L1189.6 455.6L1191.2 454.3L1192.9 454.0L1194.8 452.3L1196.7 450.4L1198.7 449.1L1200.3 451.0L1202.0 451.6L1203.4 453.6L1204.7 454.2L1206.1 455.7L1207.8 457.4L1209.4 458.7L1210.7 458.7L1211.9 457.4L1213.6 458.7L1215.2 460.7L1217.1 461.5L1219.0 463.6L1220.8 461.9L1222.6 461.0L1224.3 459.7L1226.0 459.3L1227.6 458.5L1229.3 457.0L1230.9 452.4L1232.6 454.8L1234.2 457.7L1235.9 457.7L1237.5 458.2L1238.8 460.3L1240.0 461.5L1241.2 462.1L1242.5 463.6L1244.5 456.5L1245.5 458.1L1246.6 458.7L1247.9 456.6L1249.1 454.0L1250.3 452.9L1251.6 452.1L1253.2 450.7L1254.9 448.3L1256.5 446.8L1258.2 445.8L1259.8 442.1L1261.5 441.9L1263.1 440.5L1264.4 444.6L1265.6 447.4L1267.1 449.5L1268.6 451.6L1270.0 448.3L1271.4 444.5L1272.8 447.7L1274.2 449.4L1276.1 448.2L1278.0 446.1L1279.3 443.2L1280.5 439.5L1281.7 439.1L1283.0 437.5L1284.0 439.5L1285.1 440.0L1287.1 452.4L1288.8 443.3L1290.4 442.1L1292.1 440.0L1293.7 439.5L1295.4 437.5L1296.6 435.5L1297.9 434.2L1299.1 433.4L1300.3 432.2L1302.0 441.7L1303.6 441.7L1305.3 441.2L1306.9 440.6L1308.6 440.5L1309.8 435.1L1311.1 430.1L1312.7 428.3L1314.4 427.6L1316.0 427.1L1317.7 425.1L1318.9 428.6L1320.2 432.6L1321.4 437.1L1322.6 441.7L1323.9 440.2L1325.1 437.5L1326.8 438.4L1328.4 441.0L1330.1 441.7L1331.7 442.7L1333.4 444.2L1335.0 446.6L1336.4 447.8L1337.8 449.1L1339.2 450.7L1340.8 445.5L1342.1 445.9L1343.3 445.0L1344.5 447.6L1345.8 449.1L1347.0 451.3L1348.3 452.7L1349.9 449.6L1351.6 446.6L1353.2 450.4L1354.9 454.0L1356.5 455.2L1358.2 457.7L1359.8 458.7L1361.5 460.0L1363.1 461.3L1364.8 463.1L1366.2 464.2L1367.5 464.2L1368.9 465.6L1370.2 464.7L1371.4 464.3L1373.4 456.5L1374.9 459.7L1376.4 461.5L1377.7 462.8L1379.1 464.8L1380.5 467.3L1382.1 468.0L1383.8 469.8L1385.8 475.2L1386.9 473.7L1387.9 473.1L1389.6 473.8L1391.2 474.3L1392.9 475.5L1394.5 473.2L1396.2 471.4L1397.5 473.9L1399.0 485.5L1400.5 483.6L1402.0 482.5L1403.4 481.7L1404.7 481.9L1406.1 481.3L1407.5 481.9L1408.9 482.8L1410.2 483.8L1411.6 484.5L1413.0 483.7L1414.4 484.6L1415.8 483.2L1417.1 483.5L1418.5 482.1L1420.4 481.5L1422.4 481.5L1424.3 480.5L1426.0 479.6L1427.6 480.0L1429.3 479.7L1430.9 481.2L1432.6 481.3L1434.2 482.5L1436.1 484.1L1438.1 485.1L1440.0 486.1L1441.7 484.5L1443.3 483.1L1445.0 484.4L1446.6 483.8L1448.3 484.5L1449.9 485.1L1451.6 486.0L1453.2 486.4L1454.6 484.9L1456.0 484.6L1457.4 482.8L1459.0 483.6L1460.7 484.1L1462.0 483.2L1463.4 482.0L1464.8 480.8L1466.7 480.6L1468.7 479.6L1470.6 477.9L1472.2 478.2L1473.9 477.4L1475.5 477.4L1477.2 478.7L1478.8 477.3L1480.5 476.2L1481.9 476.0L1483.3 474.9L1484.6 475.4L1486.3 475.8L1487.9 477.5L1489.6 478.5L1491.2 477.9L1492.6 478.1L1494.0 480.2L1495.4 480.3L1496.7 481.0L1498.1 481.8L1499.5 481.5L1501.2 479.4L1502.8 478.7L1504.0 478.1L1505.3 478.2L1506.7 479.8L1508.0 479.6L1509.4 481.5L1511.1 481.2L1512.7 481.9L1514.4 482.5L1516.0 482.3L1517.7 482.7L1519.3 483.6L1521.0 483.5L1522.6 482.2L1524.3 482.5L1525.7 483.5L1527.1 483.2L1528.4 483.1L1530.1 481.3L1531.7 480.8L1533.4 481.3L1535.0 480.1L1536.7 480.3L1538.6 479.5L1540.5 478.7L1542.3 480.0L1544.1 481.2L1546.0 481.0L1547.9 482.0L1549.7 481.7L1551.6 482.8L1552.9 481.9L1554.3 482.6L1555.7 481.5L1557.4 482.7L1559.0 483.0L1560.7 483.6L1562.3 483.7L1564.0 483.7L1565.6 482.8L1567.3 482.7L1568.9 483.7L1570.6 484.1L1572.2 483.9L1573.9 484.3L1575.5 485.3L1576.9 483.7L1578.3 483.0L1579.7 482.5L1581.6 482.3L1583.5 483.1L1585.5 484.1L1587.3 484.0L1589.1 484.5L1590.9 484.9L1592.7 485.0L1594.5 484.5L1595.8 486.3L1597.0 487.4L1598.7 487.3L1600.3 487.9L1602.0 486.5L1603.6 486.9L1605.3 486.7L1606.9 487.8L1608.9 487.8L1610.8 487.1L1612.7 486.4L1614.4 486.2L1616.0 486.7L1617.7 486.9L1619.3 487.4L1621.3 487.7L1623.2 488.1L1625.1 488.6L1626.8 488.3L1628.4 488.9L1630.1 488.8L1631.7 488.3L1633.4 488.4L1635.0 488.4L1636.7 488.2L1638.3 488.6L1639.9 489.7L1641.4 490.7L1643.0 490.6L1644.8 489.4L1646.6 489.1L1648.3 489.5L1649.9 489.6L1651.6 489.6L1653.2 489.4L1654.6 488.4L1656.0 489.0L1657.4 488.6L1659.0 489.1L1660.7 490.6L1662.3 490.1L1664.0 490.8L1665.6 490.7L1667.3 490.3L1668.9 489.4L1670.3 489.5L1671.7 489.6L1673.1 489.1L1674.7 489.9L1676.4 490.0L1678.0 490.6L1679.7 490.0L1681.3 491.3L1683.0 491.5L1684.6 491.1L1686.3 491.8L1687.9 491.7L1689.6 491.0L1691.2 491.5L1692.9 492.2L1694.5 491.6L1696.2 492.4L1697.9 492.2L1699.5 491.6L1701.2 492.1L1703.1 492.7L1705.1 492.7L1707.1 492.5L1709.1 491.7L1711.1 491.7L1713.0 491.4L1714.9 491.2L1716.7 492.1L1718.6 491.9L1720.5 491.1L1722.4 492.1L1724.3 491.4L1725.9 491.6L1727.4 491.5L1729.0 491.6L1730.6 491.9" fill="none" stroke="#4f8fe8" stroke-width="1.1" stroke-linejoin="round"/><rect x="16" y="496" width="1718" height="1" fill="#2b2b2b"/><rect x="18" y="497" width="5.75" height="4" fill="#0b5c50"/><rect x="25" y="497" width="3.75" height="4" fill="#7d212d"/><rect x="30.5" y="497" width="4.00" height="4" fill="#0b5c50"/><rect x="36.25" y="497" width="4.25" height="4" fill="#0b5c50"/><rect x="42" y="497" width="3.00" height="4" fill="#7d212d"/><rect x="46.25" y="497" width="6.75" height="4" fill="#0b5c50"/><rect x="55" y="497" width="20.00" height="4" fill="#0b5c50"/><rect x="77" y="497" width="3.50" height="4" fill="#0b5c50"/><rect x="82" y="497" width="11.75" height="4" fill="#0b5c50"/><rect x="95" y="497" width="1.75" height="4" fill="#7d212d"/><rect x="98" y="497" width="10.00" height="4" fill="#0b5c50"/><rect x="109.25" y="497" width="4.50" height="4" fill="#0b5c50"/><rect x="115" y="497" width="18.00" height="4" fill="#7d212d"/><rect x="134.25" y="497" width="69.50" height="4" fill="#0b5c50"/><rect x="205.75" y="497" width="5.00" height="4" fill="#0b5c50"/><rect x="212.75" y="497" width="8.50" height="4" fill="#0b5c50"/><rect x="223" y="497" width="7.00" height="4" fill="#0b5c50"/><rect x="231" y="497" width="12.75" height="4" fill="#7d212d"/><rect x="245" y="497" width="30.75" height="4" fill="#0b5c50"/><rect x="277" y="497" width="6.75" height="4" fill="#7d212d"/><rect x="285" y="497" width="37.50" height="4" fill="#0b5c50"/><rect x="324" y="497" width="2.75" height="4" fill="#7d212d"/><rect x="328" y="497" width="13.75" height="4" fill="#0b5c50"/><rect x="343.75" y="497" width="5.00" height="4" fill="#0b5c50"/><rect x="350.75" y="497" width="5.00" height="4" fill="#0b5c50"/><rect x="357" y="497" width="13.75" height="4" fill="#0b5c50"/><rect x="372" y="497" width="66.75" height="4" fill="#7d212d"/><rect x="440" y="497" width="40.50" height="4" fill="#0b5c50"/><rect x="482" y="497" width="11.00" height="4" fill="#7d212d"/><rect x="494.25" y="497" width="10.25" height="4" fill="#0b5c50"/><rect x="506" y="497" width="14.75" height="4" fill="#7d212d"/><rect x="522" y="497" width="28.50" height="4" fill="#0b5c50"/><rect x="552" y="497" width="81.00" height="4" fill="#7d212d"/><rect x="634.25" y="497" width="130.25" height="4" fill="#0b5c50"/><rect x="766" y="497" width="12.75" height="4" fill="#7d212d"/><rect x="780" y="497" width="61.25" height="4" fill="#0b5c50"/><rect x="843" y="497" width="16.50" height="4" fill="#0b5c50"/><rect x="862" y="497" width="11.25" height="4" fill="#0b5c50"/><rect x="874.75" y="497" width="3.75" height="4" fill="#7d212d"/><rect x="880" y="497" width="3.25" height="4" fill="#0b5c50"/><rect x="885.5" y="497" width="10.25" height="4" fill="#0b5c50"/><rect x="898" y="497" width="15.00" height="4" fill="#0b5c50"/><rect x="915" y="497" width="15.00" height="4" fill="#0b5c50"/><rect x="931.25" y="497" width="18.75" height="4" fill="#7d212d"/><rect x="951.5" y="497" width="31.00" height="4" fill="#0b5c50"/><rect x="984.25" y="497" width="13.75" height="4" fill="#0b5c50"/><rect x="1000" y="497" width="4.50" height="4" fill="#0b5c50"/><rect x="1007" y="497" width="15.00" height="4" fill="#0b5c50"/><rect x="1023.25" y="497" width="1.75" height="4" fill="#7d212d"/><rect x="1026.25" y="497" width="8.75" height="4" fill="#0b5c50"/><rect x="1037" y="497" width="14.75" height="4" fill="#0b5c50"/><rect x="1053" y="497" width="5.75" height="4" fill="#7d212d"/><rect x="1060" y="497" width="15.75" height="4" fill="#0b5c50"/><rect x="1077" y="497" width="22.50" height="4" fill="#7d212d"/><rect x="1101.25" y="497" width="7.50" height="4" fill="#0b5c50"/><rect x="1110.25" y="497" width="3.50" height="4" fill="#7d212d"/><rect x="1115" y="497" width="45.50" height="4" fill="#0b5c50"/><rect x="1162" y="497" width="2.75" height="4" fill="#7d212d"/><rect x="1166" y="497" width="8.50" height="4" fill="#0b5c50"/><rect x="1176" y="497" width="3.50" height="4" fill="#7d212d"/><rect x="1181" y="497" width="13.50" height="4" fill="#0b5c50"/><rect x="1196" y="497" width="3.75" height="4" fill="#7d212d"/><rect x="1201" y="497" width="8.75" height="4" fill="#0b5c50"/><rect x="1212" y="497" width="4.50" height="4" fill="#0b5c50"/><rect x="1219" y="497" width="11.75" height="4" fill="#0b5c50"/><rect x="1232" y="497" width="224.50" height="4" fill="#7d212d"/><rect x="1458" y="497" width="271.50" height="4" fill="#0b5c50"/></svg>
<div class="a" style="left:11px;top:212px;height:20px;padding:0 4px 0 4.2px;background:#0f0f0f;font-size:13px;line-height:20px;color:#dbdbdb"><span style="position:relative;top:1.5px">Equity</span></div>
<div class="a" style="left:11px;top:237px;height:20px;padding:0 4px 0 4.2px;background:#0f0f0f;font-size:13px;line-height:20px;color:#dbdbdb"><span style="position:relative;top:1.5px">Buy &amp; hold</span></div>
<div class="a" style="left:11px;top:262px;height:20px;padding:0 4px 0 4.2px;background:#0f0f0f;font-size:13px;line-height:20px;color:#4a4a4a"><span style="position:relative;top:1.5px">Trades excursions<span style="display:inline-block;width:36px"></span></span></div>
<div class="a" style="left:11px;top:287px;height:20px;padding:0 4px 0 4.2px;background:#0f0f0f;font-size:13px;line-height:20px;color:#dbdbdb"><span style="position:relative;top:1.5px">Run-up / Drawdowns</span></div>
<svg width="1815" height="1041"><g fill="none" stroke="#dbdbdb" stroke-width="1.15"><path d="M135.6 273.8c2.1-3.4 4.7-5 7.7-5s5.6 1.6 7.7 5c-2.1 3.4-4.7 5-7.7 5s-5.6-1.6-7.7-5z"/><circle cx="143.3" cy="273.8" r="2.7"/><path d="M138 280l10.6-12.4"/></g><rect x="16.5" y="316.5" width="28" height="20" rx="3" fill="#0f0f0f" stroke="#4a4a4a"/><path d="M26.3 328.3l4.3-3.9 4.3 3.9" fill="none" stroke="#dbdbdb" stroke-width="1.35"/></svg>
<div class="a" style="left:16px;top:555px;width:1783px;height:520px;border:1px solid #474747;border-radius:12px"></div>
<svg width="1815" height="1041"><path d="M37.6 580.2l4.5 4.5 4.5-4.5" fill="none" stroke="#dbdbdb" stroke-width="1.7"/></svg>
<div class="a b" style="top:573px;font-size:18px;left:59.5px;color:#dbdbdb;">Performance</div>
<div class="a b" style="top:622px;font-size:14px;left:33px;color:#dbdbdb;">Profit structure</div>
<div class="a b" style="top:622px;font-size:14px;left:923.5px;color:#dbdbdb;">Benchmarking</div>
<svg width="1815" height="1041"><rect x="33" y="657" width="806" height="1" fill="#2b2b2b"/><rect x="33" y="699" width="806" height="1" fill="#2b2b2b"/><rect x="33" y="741" width="806" height="1" fill="#2b2b2b"/><rect x="33" y="782" width="806" height="1" fill="#2b2b2b"/><rect x="104" y="658" width="60" height="1.5" fill="#0a5c4f"/><rect x="104" y="659.4" width="60" height="165" fill="#089981"/><rect x="305" y="659" width="60" height="126" fill="#f23645"/><rect x="507" y="784" width="60" height="9" fill="#ff9800"/><rect x="709" y="792" width="60" height="32.5" fill="#3179f5"/><path d="M164 659.5H305M365 784.5H507M567 792.5H709" stroke="#a6a6a6" stroke-width="1" stroke-dasharray="3 2" fill="none"/><rect x="33" y="824" width="806" height="1" fill="#8c8c8c"/></svg>
<div class="a " style="top:652px;font-size:11.7px;right:924px;color:#dbdbdb;">2.80<span style="margin-left:2.2px">K</span></div>
<div class="a " style="top:693px;font-size:11.7px;right:924px;color:#dbdbdb;">2.10<span style="margin-left:2.2px">K</span></div>
<div class="a " style="top:733px;font-size:11.7px;right:924px;color:#dbdbdb;">1.40<span style="margin-left:2.2px">K</span></div>
<div class="a " style="top:774px;font-size:11.7px;right:924px;color:#dbdbdb;">700.00</div>
<div class="a " style="top:814px;font-size:11.7px;right:924px;color:#dbdbdb;">0.00</div>
<div class="a " style="top:842px;font-size:13px;left:256px;color:#9a9a9a;">Total profit</div>
<div class="a " style="top:842px;font-size:13px;left:348px;color:#9a9a9a;">Open P&amp;L</div>
<div class="a " style="top:842px;font-size:13px;left:440px;color:#9a9a9a;">Total loss</div>
<div class="a " style="top:842px;font-size:13px;left:526px;color:#9a9a9a;">Commission</div>
<div class="a " style="top:842px;font-size:13px;left:629px;color:#9a9a9a;">Total P&amp;L</div>
<div class="a " style="top:842px;font-size:13px;left:1244.5px;color:#9a9a9a;">P&amp;L for buy &amp; hold</div>
<div class="a " style="top:842px;font-size:13px;left:1384.5px;color:#9a9a9a;">P&amp;L for strategy</div>
<svg width="1815" height="1041"><circle cx="244" cy="849" r="4" fill="#089981"/><circle cx="336" cy="849" r="4" fill="#0a5346"/><circle cx="428" cy="849" r="4" fill="#f23645"/><circle cx="514" cy="849" r="4" fill="#ff9800"/><circle cx="617" cy="849" r="4" fill="#3179f5"/><circle cx="1232" cy="849" r="4" fill="#ff9800"/><circle cx="1372" cy="849" r="4" fill="#3179f5"/></svg>
<svg width="1815" height="1041"><rect x="923" y="660" width="787" height="1" fill="#2b2b2b"/><rect x="923" y="714" width="787" height="1" fill="#2b2b2b"/><rect x="923" y="821" width="787" height="1" fill="#2b2b2b"/><path d="M993 746H1249V765H990V749a3 3 0 0 1 3-3z" fill="#885208"/><path d="M990 765H1249V789H993a3 3 0 0 1-3-3z" fill="#ff9800"/><path d="M1249 746L1317 765L1249 789z" fill="#ff9800" fill-opacity="0.15"/><path d="M1383 692H1639a3 3 0 0 1 3 3V705H1383z" fill="#214887"/><rect x="1383" y="705" width="259" height="60" fill="#3179f5"/><path d="M1317 765L1383 692V765z" fill="#3179f5" fill-opacity="0.22"/><rect x="923" y="765" width="787" height="1" fill="#8c8c8c"/><path d="M1249 746L1317 765M1249 789L1317 765M1249 765.5H1317" stroke="#ff9800" stroke-width="1" stroke-dasharray="3 2" fill="none"/><path d="M1317 765L1383 692M1317 765L1383 705M1317 765.5H1383" stroke="#3179f5" stroke-opacity=".85" stroke-width="1" stroke-dasharray="3 2" fill="none"/><circle cx="1317" cy="765.3" r="3.4" fill="#9e9e9e"/></svg>
<div class="a" style="left:1129px;top:737px;width:55px;height:18px;background:#e27d1c;border-radius:2px 0 0 2px"></div>
<div class="a" style="left:1185px;top:737px;width:63.5px;height:18px;background:#e27d1c;border-radius:0 2px 2px 0"></div>
<div class="a" style="left:1129px;top:780px;width:55px;height:18px;background:#c96f17;border-radius:2px 0 0 2px"></div>
<div class="a" style="left:1185px;top:780px;width:63.5px;height:18px;background:#c96f17;border-radius:0 2px 2px 0"></div>
<div class="a" style="left:1129px;top:798px;width:55px;height:18px;background:#e27d1c;border-radius:2px 0 0 2px"></div>
<div class="a" style="left:1185px;top:798px;width:63.5px;height:18px;background:#e27d1c;border-radius:0 2px 2px 0"></div>
<div class="a" style="left:1383px;top:678px;width:55px;height:18px;background:#3179f5;border-radius:2px 0 0 2px"></div>
<div class="a" style="left:1439px;top:678px;width:62.5px;height:18px;background:#3179f5;border-radius:0 2px 2px 0"></div>
<div class="a" style="left:1383px;top:696px;width:55px;height:18px;background:#2558e0;border-radius:2px 0 0 2px"></div>
<div class="a" style="left:1439px;top:696px;width:62.5px;height:18px;background:#2558e0;border-radius:0 2px 2px 0"></div>
<div class="a" style="left:1383px;top:756px;width:55px;height:18px;background:#3179f5;border-radius:2px 0 0 2px"></div>
<div class="a" style="left:1439px;top:756px;width:62.5px;height:18px;background:#3179f5;border-radius:0 2px 2px 0"></div>
<div class="a" style="left:17px;top:874px;width:1781px;height:40px;background:#202020"></div>
<div class="a b" style="top:887px;font-size:14px;left:33px;color:#dbdbdb;">Returns</div>
<div class="a " style="top:927px;font-size:14px;left:33px;color:#9a9a9a;">Metric</div>
<div class="a " style="top:927px;font-size:14px;right:1097.5px;color:#9a9a9a;">All</div>
<div class="a " style="top:927px;font-size:14px;right:741.2px;color:#9a9a9a;">Long</div>
<div class="a " style="top:927px;font-size:14px;right:385.29999999999995px;color:#9a9a9a;">Short</div>
<div class="a" style="left:17px;top:955px;width:1781px;height:1px;background:#4a4a4a"></div>
<div class="a " style="top:977px;font-size:14px;left:33px;color:#dbdbdb;">Initial capital</div>
<div class="a " style="top:975px;font-size:14px;right:1097.5px;color:#dbdbdb;">222.00<span style="font-size:10px;margin-left:3.1px">USD</span></div>
<div class="a" style="left:17px;top:1012px;width:1781px;height:1px;background:#333"></div>
<div class="a " style="top:1034px;font-size:14px;left:33px;color:#dbdbdb;">Open P&amp;L</div>
<div class="a " style="top:1023px;font-size:14px;right:1097.5px;color:#22ab94;">+4.14<span style="font-size:10px;margin-left:3.1px">USD</span></div>
<div class="a " style="top:1043px;font-size:14px;right:1097.5px;color:#22ab94;">+0.56%</div>
<div class="a c" style="top:348px;font-size:12px;left:1744.3px;color:#c8c8c8;">100.00%</div>
<div class="a c" style="top:383px;font-size:12px;left:1744.3px;color:#c8c8c8;">50.00%</div>
<div class="a c" style="top:419px;font-size:12px;left:1744.3px;color:#c8c8c8;">0.00%</div>
<div class="a c" style="top:455px;font-size:12px;left:1744.3px;color:#c8c8c8;">−50.00%</div>
<div class="a c" style="left:1741px;top:483px;width:61px;height:17px;border-radius:2.5px;background:#5496f5;color:#fff;font-size:12px;line-height:17px;text-align:right;padding-right:4.6px"><span style="position:relative;top:.5px">−94.53%</span></div>
<div class="a b c" style="top:511px;font-size:12px;left:18px;color:#cfcfcf;">2022</div>
<div class="a c" style="top:511px;font-size:12px;left:174.75px;color:#b4b4b4;">Apr</div>
<div class="a c" style="top:511px;font-size:12px;left:271.25px;color:#b4b4b4;">Jun</div>
<div class="a c" style="top:511px;font-size:12px;left:358.75px;color:#b4b4b4;">Aug</div>
<div class="a b c" style="top:511px;font-size:12px;left:512.5px;color:#cfcfcf;">2023</div>
<div class="a c" style="top:511px;font-size:12px;left:623.5px;color:#b4b4b4;">Apr</div>
<div class="a c" style="top:511px;font-size:12px;left:718.75px;color:#b4b4b4;">Jul</div>
<div class="a c" style="top:511px;font-size:12px;left:798.5px;color:#b4b4b4;">Oct</div>
<div class="a b c" style="top:511px;font-size:12px;left:944px;color:#cfcfcf;">2024</div>
<div class="a c" style="top:511px;font-size:12px;left:1065.25px;color:#b4b4b4;">Apr</div>
<div class="a c" style="top:511px;font-size:12px;left:1158.75px;color:#b4b4b4;">Jul</div>
<div class="a c" style="top:511px;font-size:12px;left:1257.25px;color:#b4b4b4;">Oct</div>
<div class="a b c" style="top:511px;font-size:12px;left:1336.75px;color:#cfcfcf;">2025</div>
<div class="a c" style="top:511px;font-size:12px;left:1422.7px;color:#b4b4b4;">Mar</div>
<div class="a c" style="top:511px;font-size:12px;left:1515.3px;color:#b4b4b4;">Jul</div>
<div class="a b c" style="top:511px;font-size:12px;left:1654px;color:#cfcfcf;">2026</div>
<div class="a c" style="top:738px;font-size:13px;left:1135.3px;color:#fff;">Max</div>
<div class="a c" style="top:738px;font-size:13px;right:571.5px;color:#fff;">75.43%</div>
<div class="a c" style="top:782px;font-size:13px;left:1135.3px;color:#fff;">Current</div>
<div class="a c" style="top:782px;font-size:13px;right:571.5px;color:#fff;">−94.53%</div>
<div class="a c" style="top:800px;font-size:13px;left:1135.3px;color:#fff;">Min</div>
<div class="a c" style="top:800px;font-size:13px;right:571.5px;color:#fff;">−94.79%</div>
<div class="a c" style="top:680px;font-size:13px;left:1389.3px;color:#fff;">Max</div>
<div class="a c" style="top:680px;font-size:13px;right:319.5px;color:#fff;">285.67%</div>
<div class="a c" style="top:698px;font-size:13px;left:1389.3px;color:#fff;">Current</div>
<div class="a c" style="top:698px;font-size:13px;right:319.5px;color:#fff;">234.02%</div>
<div class="a c" style="top:758px;font-size:13px;left:1389.3px;color:#fff;">Min</div>
<div class="a c" style="top:758px;font-size:13px;right:319.5px;color:#fff;">−1.87%</div>
<div class="a c" style="top:655px;font-size:11px;left:1720px;color:#d0d0d0;">410.00%</div>
<div class="a c" style="top:709px;font-size:11px;left:1720px;color:#d0d0d0;">200.00%</div>
<div class="a c" style="top:760px;font-size:11px;left:1720px;color:#d0d0d0;">0.00%</div>
<div class="a c" style="top:816px;font-size:11px;left:1720px;color:#d0d0d0;">−220.00%</div>
<div class="c" style="position:absolute;left:0;top:0;width:1815px;height:400px"><div class="a" style="left:1557px;top:41px;width:250px;height:286px;border-radius:8px;background:#1f1f1f;box-shadow:0 2px 4px rgba(0,0,0,.5)"></div>
<div class="a" style="left:1563px;top:47px;width:238px;height:32px;border-radius:6px;background:#f2f2f2"></div>
<div class="a " style="top:56px;font-size:14px;left:1571px;color:#0f0f0f;">Range from chart</div>
<div class="a" style="left:1563px;top:85px;width:238px;height:1px;background:#3d3d3d"></div>
<div class="a " style="top:99px;font-size:11px;left:1571px;color:#8c8c8c;letter-spacing:.36px;">OTHER RANGES</div>
<div class="a " style="top:125px;font-size:14px;left:1571px;color:#dbdbdb;">Last 7 days</div>
<div class="a " style="top:157px;font-size:14px;left:1571px;color:#dbdbdb;">Last 30 days</div>
<div class="a " style="top:189px;font-size:14px;left:1571px;color:#dbdbdb;">Last 90 days</div>
<div class="a " style="top:221px;font-size:14px;left:1571px;color:#dbdbdb;">Last 365 days</div>
<div class="a " style="top:253px;font-size:14px;left:1571px;color:#dbdbdb;">Entire history</div>
<div class="a" style="left:1563px;top:282px;width:238px;height:1px;background:#3d3d3d"></div>
<svg width="1815" height="1041"><g fill="none" stroke="#dbdbdb" stroke-width="1.2"><rect x="1572.3999999999999" y="298.1" width="17.2" height="14.4" rx="2"/><path d="M1572.3999999999999 301.9h17.2M1577.1 295.1v3M1585.9 295.1v3"/></g></svg>
<div class="a " style="top:298px;font-size:14px;left:1599.3px;color:#dbdbdb;">Custom date range…</div></div>
</body></html>
